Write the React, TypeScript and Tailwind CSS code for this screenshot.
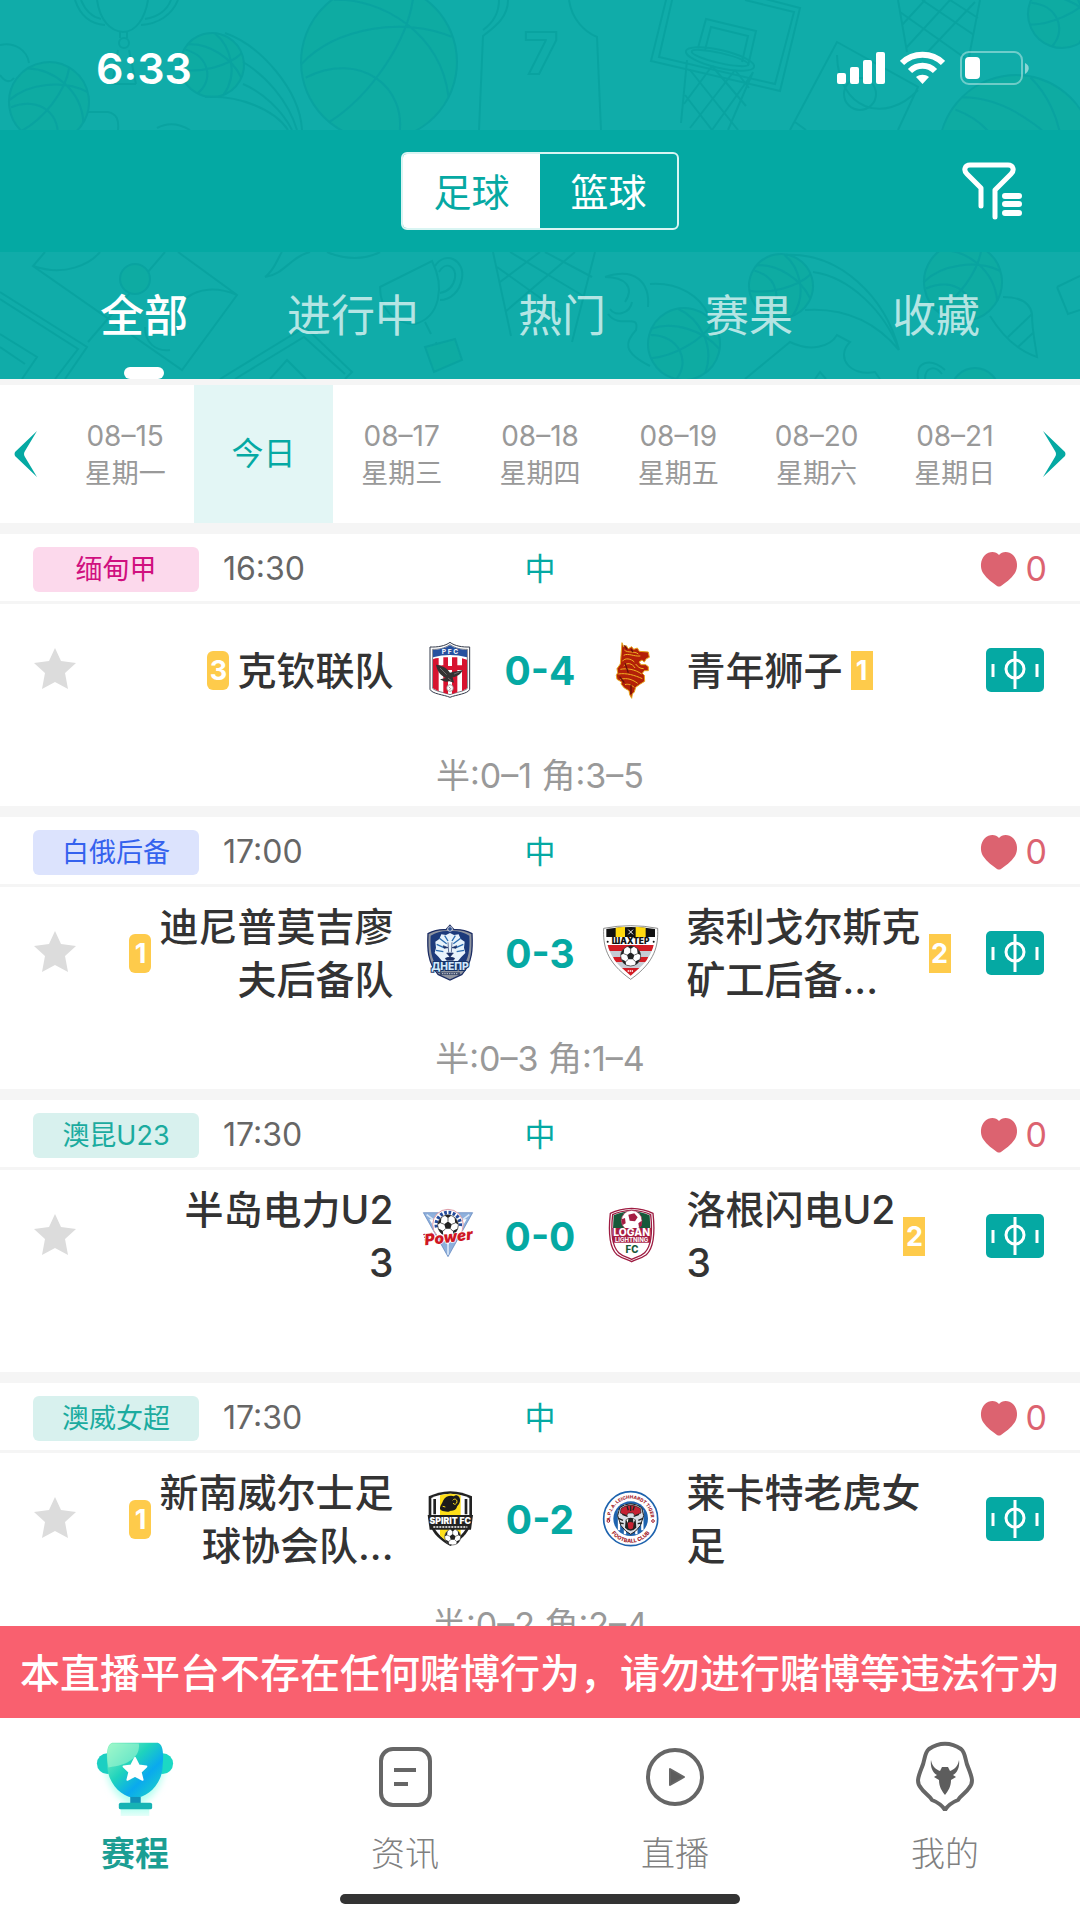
import { useState } from "react";
import type { ReactNode } from "react";

type Team = { lines: string[]; rank?: number; crest: ReactNode };
type Match = {
  league: string;
  badge: string;
  time: string;
  home: Team;
  away: Team;
  score: string;
  detail?: string;
};

/* ---------- Header doodles ---------- */

function Ball({ cx, cy, r, rot = 0 }: { cx: number; cy: number; r: number; rot?: number }) {
  return (
    <g transform={`translate(${cx} ${cy}) rotate(${rot}) scale(${r / 100})`}>
      <circle r="100" fill="#0eaba1" vectorEffect="non-scaling-stroke" />
      <path
        d="M-98 -18 C-45 -55 45 -50 98 -12 M-78 62 C-20 40 45 -20 62 -78 M-40 -90 C20 -80 85 -20 78 62 M-96 0 C-20 -20 30 40 5 99"
        fill="none"
        vectorEffect="non-scaling-stroke"
      />
    </g>
  );
}

function StatusDoodles() {
  return (
    <svg
      aria-hidden="true"
      viewBox="0 0 1080 130"
      preserveAspectRatio="xMidYMid slice"
      className="absolute inset-0 h-full w-full"
      fill="none"
      stroke="#08a19f"
      strokeWidth="2"
      opacity="0.8"
    >
      <path d="M97 0 C100 20 110 31 123 32 C136 32 145 18 148 0 M75 0 C80 15 90 24 105 25 M81 0 C85 10 92 17 101 19 M178 0 C172 15 158 24 141 25 M171 0 C167 10 158 17 145 19 M120 32 v6 M127 32 v6 M118 50 L112 84 M129 50 L136 84 M112 84 H136" />
      <circle cx="124" cy="43" r="5" />
      <path d="M0 45 C15 42 27 50 29 63 M0 75 C5 82 10 83 14 78 M88 112 H108 C117 114 119 120 118 130 M157 128 C168 122 180 124 190 130" />
      <Ball cx={49} cy={102} r={40} rot={-8} />
      <Ball cx={212} cy={65} r={32} rot={30} />
      <path d="M225 33 C260 45 300 90 302 130 M243 62 C265 75 288 100 297 130 M243 84 C262 92 282 110 292 130 M205 97 C240 95 275 110 288 130" />
      <Ball cx={379} cy={62} r={78} rot={-12} />
      <path d="M508 0 C508 20 490 30 483 36 L479 130 M569 0 C572 20 585 32 597 37 L601 130 M499 0 C499 15 490 25 483 30" />
      <text x="524" y="74" fontSize="58" fontWeight="800">7</text>
      <path d="M667 -4 L651 61 L780 91 L800 8 L750 -5 M673 -4 L659 57 L775 84 L794 12 L745 0 M698 48 L706 19 L756 31 L748 66 M705 50 L711 27 L748 36 L742 62" />
      <ellipse cx="720" cy="59" rx="35" ry="9" transform="rotate(13 720 59)" />
      <ellipse cx="720" cy="58" rx="29" ry="5" transform="rotate(13 720 58)" />
      <path d="M687 60 L681 123 M753 72 L728 130 M690 70 L738 130 M712 66 L746 106 M735 70 L749 88 M685 95 L712 130 M712 66 L684 104 M735 70 L690 128 M752 74 L712 130" />
      <path d="M898 0 L907 52 M980 0 L968 62 M900 12 L965 58 M922 0 L974 35 M950 0 L978 18 M925 0 L902 25 M950 0 L906 48 M975 2 L922 58" />
      <path d="M790 130 L837 42 L918 87 L898 130 M837 55 C838 110 885 125 918 90 M795 122 L806 130" />
      <circle cx="860" cy="94" r="16" />
      <Ball cx={1062} cy={14} r={34} rot={20} />
      <Ball cx={1016} cy={152} r={77} rot={35} />
    </svg>
  );
}

function TabDoodles() {
  return (
    <svg
      aria-hidden="true"
      viewBox="0 0 1080 127"
      preserveAspectRatio="xMidYMid slice"
      className="absolute inset-0 h-full w-full"
      fill="none"
      stroke="#08a19f"
      strokeWidth="2"
      opacity="0.8"
    >
      <path d="M45 0 L33 14 L182 118 L237 43 L178 0 M33 14 C65 25 90 12 100 0 M165 0 L88 90 M237 43 C195 25 165 55 178 82 M145 75 C145 90 155 100 170 98" />
      <path d="M0 40 L87 95 L65 127 M0 47 L78 97 L55 127 M0 82 L37 105 L22 127 M0 95 L25 112" />
      <circle cx="135" cy="27" r="15" fill="#0eaba1" />
      <path d="M265 25 C275 18 278 5 282 0 M265 25 C285 22 290 5 310 0 M327 0 C345 8 365 8 380 0" />
      <path d="M380 35 L432 9 C445 35 440 65 415 72 C395 72 380 58 380 35 Z M435 14 C445 -2 465 8 462 26 C460 40 450 48 440 48 M439 20 C446 8 457 15 455 26 C453 36 446 40 440 41 M425 70 L431 82 M436 90 L438 97" />
      <path d="M425 95 L455 87 L462 108 L434 120 Z" fill="#0eaba1" />
      <path d="M220 127 L305 75 L352 120 L345 127 M235 127 L304 85 L345 122 M270 127 L287 108 L306 127" />
      <path d="M493 0 L511 84 M595 0 L572 90 M497 15 L560 60 M510 0 L585 45 M545 0 L592 25 M540 0 L500 30 M575 0 L505 60" />
      <path d="M605 25 C635 15 650 30 648 55 M605 25 C625 25 635 35 625 50 M610 57 C615 65 630 62 632 50 M608 62 C620 78 640 60 636 78 C625 90 622 100 650 114 M650 32 C680 30 700 45 708 62" />
      <Ball cx={684} cy={92} r={36} rot={15} />
      <Ball cx={781} cy={34} r={32} rot={30} />
      <path d="M785 3 C840 0 885 45 899 98 M813 20 C850 25 885 60 899 98 M805 58 C850 55 880 75 899 98" />
      <path d="M745 127 L790 90 C810 100 830 95 837 83 L850 90 C835 105 850 125 875 120 L880 127 M815 127 L820 120 L826 127 M918 127 C915 110 930 105 945 118 M925 127 C925 115 935 113 942 122" />
      <Ball cx={963} cy={30} r={39} rot={-10} />
      <path d="M1003 45 C1020 45 1030 50 1032 62 C1032 80 1036 95 1037 105 C1015 98 1000 80 990 64 M1032 62 L1008 85 M1034 80 L1018 95 M1057 35 L1080 24 M1057 35 L1068 62 L1080 58" />
      <circle cx="975" cy="140" r="24" fill="#0eaba1" />
    </svg>
  );
}

/* ---------- Icons ---------- */

function SignalIcon() {
  return (
    <svg viewBox="0 0 48 34" className="h-[34px] w-12" fill="#fff" aria-label="信号">
      <rect x="0" y="22" width="9" height="11" rx="2" />
      <rect x="13" y="16" width="9" height="17" rx="2" />
      <rect x="26" y="9" width="9" height="24" rx="2" />
      <rect x="39" y="1" width="9" height="32" rx="2" />
    </svg>
  );
}

function WifiIcon() {
  return (
    <svg viewBox="0 0 45 34" className="h-[34px] w-[45px]" fill="none" stroke="#fff" strokeWidth="6" aria-label="无线网络">
      <path d="M2 12 C13 1 32 1 43 12" />
      <path d="M10 20 C17 13 28 13 35 20" />
      <path d="M16 26 C20 23 25 23 29 26 L22.500 33 Z" fill="#fff" stroke="none" />
    </svg>
  );
}

function BatteryIcon() {
  return (
    <svg viewBox="0 0 70 34" className="h-[34px] w-[70px]" aria-label="电量">
      <rect x="1" y="1" width="61" height="32" rx="8" fill="none" stroke="#fff" strokeOpacity="0.4" strokeWidth="2" />
      <rect x="5" y="6" width="15" height="22" rx="4" fill="#fff" />
      <path d="M65 12 C70 14 70 20 65 23 Z" fill="#fff" fillOpacity="0.5" />
    </svg>
  );
}

function FilterIcon() {
  return (
    <svg viewBox="0 0 60 58" className="h-[58px] w-[60px]" fill="none" stroke="#fff" strokeWidth="5" strokeLinecap="round" strokeLinejoin="round">
      <path d="M19 44 V26 L5 12 C1 8 3 3 8 3 H46 C51 3 53 8 49 12 L33 28 V55" />
      <path d="M43 34 H57 M43 42 H57 M43 51 H57" strokeWidth="6" />
    </svg>
  );
}

function ArrowIcon({ flip = false }: { flip?: boolean }) {
  return (
    <svg viewBox="0 0 24 46" className={flip ? "h-[46px] w-6 rotate-180" : "h-[46px] w-6"} fill="#05a9a3">
      <path d="M23 0 L1 21 Q0 23 1 25 L23 46 L11 26 Q9 23 11 20 Z" />
    </svg>
  );
}

function HeartIcon() {
  return (
    <svg viewBox="0 0 38 36" className="h-9 w-[38px]" fill="#dc6370">
      <path d="M19 4 C22 0 29 0 33 4 C38 9 38 17 35 22 C31 28 25 32 21 35 Q19 36 17 35 C13 32 7 28 3 22 C0 17 0 9 5 4 C9 0 16 0 19 4 Z" />
    </svg>
  );
}

function StarIcon() {
  return (
    <svg viewBox="0 2 42 41" className="h-[41px] w-[42px] overflow-visible" fill="#dcdcdc">
      <path d="M21 0 L27 13 L42 15 L31 25 L34 41 L21 34 L8 41 L11 25 L0 15 L15 13 Z" />
    </svg>
  );
}

function PitchIcon() {
  return (
    <svg viewBox="0 0 58 44" className="h-11 w-[58px]" fill="none" stroke="#fff">
      <rect width="58" height="44" rx="5" fill="#05a9a3" stroke="none" />
      <path d="M29 3 V41" strokeWidth="3" />
      <circle cx="29" cy="21" r="9" strokeWidth="3" />
      <path d="M7 16 V29 M51 16 V29" strokeWidth="3" />
    </svg>
  );
}

function TrophyIcon() {
  return (
    <svg viewBox="0 -5 84 84" className="h-20 w-20">
      <defs>
        <linearGradient id="cup" x1="0" y1="0" x2="1" y2="1">
          <stop offset="0" stopColor="#8df5bf" />
          <stop offset="0.4" stopColor="#1fd3bd" />
          <stop offset="0.65" stopColor="#0aa9ee" />
          <stop offset="1" stopColor="#1fdcc0" />
        </linearGradient>
        <linearGradient id="glow" x1="0" y1="0" x2="0" y2="1">
          <stop offset="0" stopColor="#b8fff0" />
          <stop offset="1" stopColor="#b8fff0" stopOpacity="0" />
        </linearGradient>
        <filter id="soft" x="-20%" y="-20%" width="140%" height="140%">
          <feGaussianBlur stdDeviation="4" />
        </filter>
      </defs>
      <path d="M10 20 H74 C72 48 60 60 46 68 H38 C24 60 12 48 10 20 Z" fill="#b4fff0" filter="url(#soft)" />
      <rect x="27" y="70" width="30" height="14" fill="url(#glow)" />
      <circle cx="13" cy="24" r="11" fill="#1ccfc2" />
      <circle cx="71" cy="24" r="11" fill="#1cd8c4" />
      <path d="M18 2 H66 C72 4 72 14 71 26 C71 46 54 60 42 60 C30 60 13 46 13 26 C12 14 12 4 18 2 Z" fill="url(#cup)" />
      <path d="M18 3 H46 C48 16 36 26 14 28 C12 16 12 5 18 3 Z" fill="#b6fbd3" fillOpacity="0.5" />
      <path d="M37 59 H48 V66 H37 Z" fill="#1090b8" />
      <rect x="25" y="65" width="35" height="7" rx="2" fill="#17b3b4" />
      <path d="M42 18 L46 26 L54 27 L48 33 L50 41 L42 37 L34 41 L36 33 L30 27 L38 26 Z" fill="#fff" stroke="#fff" strokeWidth="2" strokeLinejoin="round" />
    </svg>
  );
}

function NewsIcon() {
  return (
    <svg viewBox="0 0 60 64" className="h-16 w-[60px]" fill="none" stroke="#666" strokeWidth="4">
      <rect x="6" y="5" width="49" height="56" rx="12" />
      <path d="M19 26 H41 M19 40 H33" />
    </svg>
  );
}

function LiveIcon() {
  return (
    <svg viewBox="0 0 60 64" className="h-16 w-[60px]" fill="none" stroke="#666" strokeWidth="4">
      <circle cx="30" cy="33" r="27" />
      <path d="M25 25 V41 L39 33 Z" fill="#5d5d5d" strokeWidth="2" strokeLinejoin="round" />
    </svg>
  );
}

function MineIcon() {
  return (
    <svg viewBox="0 0 60 70" className="h-[70px] w-[60px]" fill="none" stroke="#666" strokeWidth="4" strokeLinejoin="round">
      <path d="M14 8 C24 1 36 1 46 8 C51 12 50 20 53 26 C57 36 59 42 54 47 C51 52 46 54 43 59 C38 61 33 64 30 69 C27 64 22 61 17 59 C14 54 9 52 6 47 C1 42 3 36 7 26 C10 20 9 12 14 8 Z" />
      <path
        d="M16 19 C17 25 20 28 25 30 L27 26 H33 L35 30 C40 28 43 25 44 19 C45 26 42 32 38 34 L41 36 L36 39 C36 46 33 50 30 54 C27 50 24 46 24 39 L19 36 L22 34 C18 32 15 26 16 19 Z"
        fill="#5d5d5d"
        stroke="none"
      />
    </svg>
  );
}

/* ---------- Club crests ---------- */

function Crest({ children }: { children: ReactNode }) {
  return (
    <svg viewBox="0 0 168 168" className="h-14 w-14 shrink-0 overflow-visible" aria-hidden="true">
      {children}
    </svg>
  );
}

function Football({ cx, cy, r }: { cx: number; cy: number; r: number }) {
  return (
    <g transform={`translate(${cx} ${cy}) scale(${r / 30})`}>
      <circle r="30" fill="#fff" stroke="#222" strokeWidth="2" />
      <path
        d="M0 -11 L11 -3 L7 10 H-7 L-11 -3 Z M-9 -28 Q0 -33 9 -28 L0 -21 Z M19 -23 Q29 -13 30 -3 L21 -7 Z M28 9 Q24 22 14 27 L15 16 Z M-19 -23 Q-29 -13 -30 -3 L-21 -7 Z M-28 9 Q-24 22 -14 27 L-15 16 Z"
        fill="#222"
      />
      <path d="M0 -11 V-22 M11 -3 L21 -7 M7 10 L15 17 M-7 10 L-15 17 M-11 -3 L-21 -7" stroke="#222" strokeWidth="2" />
    </g>
  );
}

const pfc = (
  <Crest>
    <path d="M84 1 C98 12 122 16 143 15 V142 C138 156 102 158 84 166 C66 158 30 156 24 142 V15 C46 16 70 12 84 1 Z" fill="#fff" stroke="#333a4a" strokeWidth="3" />
    <path d="M84 8 C99 19 120 23 136 22 V139 C128 148 102 151 84 158 C66 151 40 148 32 139 V22 C48 23 69 19 84 8 Z" fill="#fff" stroke="#333a4a" strokeWidth="2" />
    <path d="M84 10 C99 20 120 24 135 24 V46 Q84 32 33 46 V24 C48 24 69 20 84 10 Z" fill="#26519f" />
    <text x="84" y="37" textAnchor="middle" fontSize="20" fontWeight="700" fill="#fff">P F C</text>
    <path d="M33 52 Q40 48 50 48 V148 L33 139 Z M64 46 H78 V156 L64 152 Z M90 46 H106 V151 L90 156 Z M120 49 L135 53 V139 L120 147 Z" fill="#d7132f" />
    <path d="M33 70 H135 V84 H33 Z" fill="#d7132f" />
    <path d="M78 44 H90 V72 H78 Z M54 55 H60 V70 H54 Z" fill="#fff" />
    <path d="M42 68 C58 70 74 76 84 92 C98 88 112 88 122 84 C118 96 104 104 92 106 L96 122 L82 118 C70 122 60 116 54 112 L72 108 C56 100 46 88 42 68 Z" fill="#333" />
    <path d="M54 78 L74 98 M96 96 L112 90 M78 108 L88 116" stroke="#8c8c8c" strokeWidth="2" />
    <circle cx="84" cy="138" r="10" fill="#fff" stroke="#777" strokeWidth="2" />
    <path d="M80 134 L86 140 L82 144" stroke="#777" strokeWidth="2" fill="none" />
  </Crest>
);

const lions = (
  <Crest>
    <path
      d="M57 2 L62 14 L70 11 L76 20 L86 14 L92 22 L103 18 L109 28 L136 30 L139 46 L130 50 L124 60 L117 54 L108 60 L114 68 L128 68 L136 74 L136 86 L124 86 L118 94 L124 100 L125 118 L112 126 L98 136 L94 150 L88 156 L86 169 L80 158 L78 146 L64 138 L54 126 L56 120 L42 112 L40 100 L44 92 L42 80 L52 66 L54 40 Z"
      fill="#b32008"
      stroke="#e7a51c"
      strokeWidth="3"
    />
    <path
      d="M64 24 C74 34 94 26 106 36 M62 40 C76 32 92 44 112 42 M58 58 C66 46 84 50 94 60 M62 72 C72 60 88 64 96 78 M52 82 C72 78 96 82 116 96 M46 96 C70 92 96 100 118 110 M52 112 C74 106 90 114 104 124 M66 128 C76 124 86 130 94 136 M98 66 C104 74 110 80 122 80"
      fill="none"
      stroke="#f0b222"
      strokeWidth="3"
    />
    <path d="M64 10 L72 22 M84 22 L90 30 M66 64 L76 92 M50 104 L64 122 M84 128 V156" stroke="#68100a" strokeWidth="4" />
  </Crest>
);

const dnepr = (
  <Crest>
    <path d="M84 1 L96 14 Q124 12 150 26 C152 70 152 112 120 148 L84 165 L48 148 C16 112 16 70 18 26 Q44 12 72 14 Z" fill="#8f949f" stroke="#1b2c63" strokeWidth="4" />
    <path d="M84 18 Q118 16 142 32 C144 70 142 102 118 132 H50 C26 102 24 70 26 32 Q50 16 84 18 Z" fill="#1d3b7b" />
    <path d="M84 24 L96 30 L110 28 L116 42 L128 50 L126 68 L130 84 L118 96 L108 108 H60 L50 96 L38 84 L42 68 L40 50 L52 42 L58 28 L72 30 Z" fill="#e8f3fb" />
    <path d="M52 40 L74 56 M44 58 L66 68 M42 76 L64 80 M116 40 L94 56 M124 58 L102 68 M126 76 L104 80 M68 32 L78 48 M100 32 L90 48" stroke="#2b6cb0" strokeWidth="4" />
    <path d="M64 62 L78 68 L66 70 Z M104 62 L90 68 L102 70 Z M74 84 H94 L84 96 Z M70 100 Q84 92 98 100 L94 106 H74 Z M78 52 L80 82 M90 52 L88 82" fill="#1a2f66" stroke="#1a2f66" strokeWidth="2" />
    <circle cx="84" cy="12" r="7" fill="#2f4f8c" stroke="#fff" strokeWidth="2" />
    <text x="84" y="136" textAnchor="middle" fontSize="31" fontWeight="800" fill="#cfe8fb" stroke="#173468" strokeWidth="6" paintOrder="stroke">ДНЕПР</text>
    <path d="M54 142 H114 V150 H54 Z" fill="#3e4b6b" />
    <path d="M60 146 H108" stroke="#c7cbd6" strokeWidth="3" strokeDasharray="4 3" />
  </Crest>
);

const shakhter = (
  <Crest>
    <path d="M2 10 Q83 -6 164 10 C166 60 158 110 83 163 C8 110 0 60 2 10 Z" fill="#fff" stroke="#555" strokeWidth="2" />
    <path d="M10 12 Q83 0 156 12 V36 H10 Z" fill="#111" />
    <path d="M38 8 L66 5 V36 H38 Z M98 5 L128 8 V36 H98 Z" fill="#ffd90f" />
    <path d="M76 14 L90 28 M90 14 L76 28" stroke="#fff" strokeWidth="3" />
    <path d="M14 60 H152 Q150 70 146 78 H20 Q16 70 14 60 Z M30 96 H136 Q132 106 126 112 H40 Q34 106 30 96 Z M56 128 H110 L83 152 Z" fill="#d21c24" />
    <path d="M20 78 H146 Q142 88 137 96 H29 Q24 88 20 78 Z M40 112 H126 Q118 122 110 128 H56 Q48 122 40 112 Z" fill="#c5ccd4" />
    <text x="83" y="56" textAnchor="middle" fontSize="25" fontWeight="900" fill="#111">ШАХТЕР</text>
    <circle cx="14" cy="50" r="3" fill="#111" />
    <circle cx="152" cy="50" r="3" fill="#111" />
    <Football cx={83} cy={93} r={30} />
    <path d="M74 138 H92" stroke="#fff" strokeWidth="4" strokeDasharray="4 2" />
  </Crest>
);

const power = (
  <Crest>
    <path d="M4 14 L152 14 L78 146 Z" fill="#8eb0dc" stroke="#5b80bb" strokeWidth="2" />
    <path d="M22 34 L134 34 L100 92 L82 104 L78 112 L74 104 L56 92 Z" fill="#fff" />
    <path d="M14 20 L46 44 M142 20 L110 44 M78 140 V108" stroke="#dbe9f8" strokeWidth="5" />
    <circle cx="78" cy="50" r="46" fill="#fff" stroke="#dc9aa5" strokeWidth="3" />
    <path d="M44 58 A36 36 0 1 1 114 58" fill="none" stroke="#244a9a" strokeWidth="11" strokeDasharray="8 5" />
    <Football cx={78} cy={52} r={31} />
    <path d="M4 80 L30 76 M6 88 L24 85 M8 96 L20 94" stroke="#b7131f" strokeWidth="4" />
    <text x="80" y="103" textAnchor="middle" fontSize="46" fontWeight="900" fontStyle="italic" fill="#cf1724" stroke="#fff" strokeWidth="4" paintOrder="stroke" transform="rotate(-7 82 90)">Power</text>
  </Crest>
);

const logan = (
  <Crest>
    <path d="M86 1 C110 2 134 8 150 16 C156 70 152 120 130 140 C114 152 98 154 86 161 C74 154 58 152 42 140 C20 120 16 70 22 16 C38 8 62 2 86 1 Z" fill="#fff" stroke="#9e1c42" strokeWidth="4" />
    <path d="M86 7 C108 8 128 12 143 20 C148 66 146 114 125 134 C112 146 98 148 86 154 C74 148 60 146 47 134 C26 114 24 66 29 20 C44 12 64 8 86 7 Z" fill="none" stroke="#9e1c42" strokeWidth="4" />
    <path d="M32 22 C50 14 70 10 86 10 C102 10 122 14 140 22 L142 62 H30 Z" fill="#17593a" />
    <circle cx="86" cy="38" r="31" fill="#fff" stroke="#9e1c42" strokeWidth="2" />
    <path d="M76 20 L94 16 L104 28 L96 40 L80 38 Z M56 34 L66 30 L68 46 L58 52 Z M106 46 L116 38 L116 54 L108 58 Z" fill="#a51d43" />
    <path d="M28 60 H144 L142 104 H30 Z" fill="#a51d43" />
    <text x="86" y="84" textAnchor="middle" fontSize="31" fontWeight="800" fill="#fff">LOGAN</text>
    <text x="86" y="101" textAnchor="middle" fontSize="18" fontWeight="700" fill="#fff">LIGHTNING</text>
    <text x="87" y="134" textAnchor="middle" fontSize="29" fontWeight="800" fill="#17593a">FC</text>
  </Crest>
);

const spirit = (
  <Crest>
    <path d="M85 1 C110 2 132 8 150 16 V80 C148 120 120 146 85 165 C50 146 22 120 20 80 V16 C38 8 60 2 85 1 Z" fill="#222" />
    <path d="M85 8 C108 9 126 13 142 21 V80 C140 114 116 138 85 156 C54 138 30 114 28 80 V21 C44 13 62 9 85 8 Z" fill="#fff" />
    <path d="M54 13 Q85 4 116 13 V134 Q102 148 85 156 Q68 148 54 134 Z" fill="#ffdf19" />
    <path d="M34 24 H42 V70 H34 Z M128 24 H136 V70 H128 Z" fill="#222" />
    <path d="M64 28 C70 14 88 12 96 16 C102 8 116 16 114 30 C112 42 106 42 104 50 C98 62 88 56 80 62 C70 62 52 60 54 50 C56 42 60 38 64 28 Z" fill="#1b1b1b" />
    <path d="M92 28 C98 20 108 26 104 36 C100 42 94 40 94 36 M62 46 L70 48" stroke="#ffdf19" strokeWidth="3" fill="none" />
    <path d="M17 72 L153 72 L147 116 H23 Z" fill="#222" />
    <text x="85" y="99" textAnchor="middle" fontSize="26" fontWeight="900" fill="#fff">SPIRIT FC</text>
    <path d="M34 108 H136" stroke="#fff" strokeWidth="4" strokeDasharray="6 3" />
    <Football cx={92} cy={138} r={24} />
  </Crest>
);

const tigers = (
  <Crest>
    <defs>
      <path id="tiger-top" d="M22 84 A61 61 0 0 1 144 84" />
      <path id="tiger-bottom" d="M12 84 A71 71 0 0 0 154 84" />
    </defs>
    <circle cx="83" cy="83" r="81" fill="#fff" stroke="#1e63ae" strokeWidth="5" />
    <circle cx="83" cy="83" r="52" fill="#1e63ae" />
    <path d="M48 58 V118 M66 40 V130 M100 40 V130 M118 58 V118" stroke="#fff" strokeWidth="7" />
    <text fontSize="14" fontWeight="800" fill="#a31d2c">
      <textPath href="#tiger-top" startOffset="50%" textAnchor="middle">A.P.I.A. LEICHHARDT TIGERS</textPath>
    </text>
    <text fontSize="16" fontWeight="800" fill="#a31d2c">
      <textPath href="#tiger-bottom" startOffset="50%" textAnchor="middle">FOOTBALL CLUB</textPath>
    </text>
    <path d="M50 50 L64 42 Q83 34 102 42 L116 50 L122 74 L112 104 L98 120 L83 130 L68 120 L54 104 L44 74 Z" fill="#d9dfe6" stroke="#222" strokeWidth="3" />
    <path d="M54 52 L66 46 Q83 38 100 46 L112 52 L114 66 L96 74 L90 66 H76 L70 74 L52 66 Z" fill="#c62232" stroke="#222" strokeWidth="2" />
    <path d="M58 70 L74 76 M108 70 L92 76 M46 82 L60 88 M120 82 L106 88 M50 96 L62 98 M116 96 L104 98 M83 44 V60 M72 46 L76 58 M94 46 L90 58" stroke="#222" strokeWidth="4" />
    <path d="M68 86 Q83 74 98 86 L100 110 Q83 128 66 110 Z" fill="#222" />
    <path d="M74 96 Q83 90 92 96 L90 112 Q83 118 76 112 Z" fill="#c62232" />
    <path d="M70 86 L76 84 L74 96 Z M96 86 L90 84 L92 96 Z" fill="#fff" />
    <circle cx="16" cy="90" r="4" fill="none" stroke="#a31d2c" strokeWidth="3" />
    <circle cx="150" cy="90" r="4" fill="none" stroke="#a31d2c" strokeWidth="3" />
  </Crest>
);

/* ---------- Data ---------- */

const filters = ["全部", "进行中", "热门", "赛果", "收藏"];

const days = [
  { date: "08–15", week: "星期一" },
  { date: "今日" },
  { date: "08–17", week: "星期三" },
  { date: "08–18", week: "星期四" },
  { date: "08–19", week: "星期五" },
  { date: "08–20", week: "星期六" },
  { date: "08–21", week: "星期日" },
];

const matches: Match[] = [
  {
    league: "缅甸甲",
    badge: "bg-[#fcd9ec] text-[#d0107f]",
    time: "16:30",
    home: { lines: ["克钦联队"], rank: 3, crest: pfc },
    away: { lines: ["青年狮子"], rank: 1, crest: lions },
    score: "0-4",
    detail: "半:0–1 角:3–5",
  },
  {
    league: "白俄后备",
    badge: "bg-[#dce3fd] text-[#3562ee]",
    time: "17:00",
    home: { lines: ["迪尼普莫吉廖", "夫后备队"], rank: 1, crest: dnepr },
    away: { lines: ["索利戈尔斯克", "矿工后备..."], rank: 2, crest: shakhter },
    score: "0-3",
    detail: "半:0–3 角:1–4",
  },
  {
    league: "澳昆U23",
    badge: "bg-[#d8f1ee] text-[#1bab9f]",
    time: "17:30",
    home: { lines: ["半岛电力U2", "3"], crest: power },
    away: { lines: ["洛根闪电U2", "3"], rank: 2, crest: logan },
    score: "0-0",
  },
  {
    league: "澳威女超",
    badge: "bg-[#d8f1ee] text-[#1bab9f]",
    time: "17:30",
    home: { lines: ["新南威尔士足", "球协会队..."], rank: 1, crest: spirit },
    away: { lines: ["莱卡特老虎女", "足"], crest: tigers },
    score: "0-2",
    detail: "半:0–2 角:2–4",
  },
];

const navItems = [
  { label: "赛程", icon: <TrophyIcon /> },
  { label: "资讯", icon: <NewsIcon /> },
  { label: "直播", icon: <LiveIcon /> },
  { label: "我的", icon: <MineIcon /> },
];

/* ---------- Sections ---------- */

function TeamName({ lines }: { lines: string[] }) {
  return (
    <span className="text-[39px] leading-[53px] font-medium text-[#333] whitespace-nowrap">
      {lines.map((line) => (
        <span key={line} className="block">
          {line}
        </span>
      ))}
    </span>
  );
}

function MatchCard({ match }: { match: Match }) {
  const { home, away } = match;

  return (
    <article className="bg-white">
      <div className="grid h-[70px] grid-cols-[1fr_auto_1fr] items-center border-b-[3px] border-[#f5f5f5] px-[33px] pt-[3px]">
        <div className="flex items-center gap-6">
          <span className={`w-[166px] rounded-md text-center text-[27px] leading-[45px] ${match.badge}`}>{match.league}</span>
          <time className="text-[32px] leading-10 text-[#666]">{match.time}</time>
        </div>
        <span className="text-[31px] leading-10 text-[#05a9a3]">中</span>
        <button type="button" aria-label="点赞" className="flex items-center gap-2 justify-self-end text-[34px] leading-10 text-[#dc6370]">
          <HeartIcon />0
        </button>
      </div>

      <div className="grid h-[132px] grid-cols-[1fr_auto_1fr] items-center">
        <div className="flex items-center justify-between pl-[34px]">
          <button type="button" aria-label="收藏比赛">
            <StarIcon />
          </button>
          <div className="flex items-center gap-2 text-right">
            {home.rank && (
              <span className="w-[22px] rounded-md bg-[#fecb4b] text-center text-[27px] leading-[39px] font-bold text-white">{home.rank}</span>
            )}
            <TeamName lines={home.lines} />
          </div>
        </div>
        <div className="flex items-center px-7">
          {home.crest}
          <strong className="w-[125px] text-center text-[39px] leading-[53px] font-bold text-[#05a9a3]">{match.score}</strong>
          {away.crest}
        </div>
        <div className="flex items-center justify-between pr-9">
          <div className="flex items-center gap-2">
            <TeamName lines={away.lines} />
            {away.rank && (
              <span className="w-[22px] bg-[#fecb4b] text-center text-[27px] leading-[39px] font-bold text-white">{away.rank}</span>
            )}
          </div>
          <button type="button" aria-label="比赛详情">
            <PitchIcon />
          </button>
        </div>
      </div>

      <p className="h-[70px] pt-5 text-center text-[34px] leading-10 text-[#999]">{match.detail}</p>
    </article>
  );
}

function App() {
  const [sport, setSport] = useState("足球");
  const [filter, setFilter] = useState("全部");
  const [day, setDay] = useState("今日");

  return (
    <div className="flex h-screen flex-col overflow-hidden bg-[#f5f5f5] font-['Inter','Noto_Sans_CJK_SC',sans-serif]" lang="zh-CN">
      {/* Header */}
      <header className="shrink-0 bg-[#10aca9]">
        <div className="relative h-[130px] overflow-hidden">
          <StatusDoodles />
          <div className="relative flex h-full items-center justify-between pt-[6px] pr-[50px] pl-24 text-white">
            <span className="text-[43px] leading-[50px] font-semibold">6:33</span>
            <div className="flex items-center gap-[15px]">
              <SignalIcon />
              <WifiIcon />
              <BatteryIcon />
            </div>
          </div>
        </div>

        <div className="grid h-[122px] grid-cols-[1fr_auto_1fr] items-center bg-[#04a9a3] px-[58px]">
          <div className="col-start-2 flex overflow-hidden rounded-md border-2 border-[#d9f5f3]">
            {["足球", "篮球"].map((name) => (
              <button
                key={name}
                type="button"
                onClick={() => setSport(name)}
                className={
                  sport === name
                    ? "w-[137px] bg-white pt-[2px] text-[38px] leading-[72px] text-[#05a9a3]"
                    : "w-[137px] pt-[2px] text-[38px] leading-[72px] text-white"
                }
              >
                {name}
              </button>
            ))}
          </div>
          <button type="button" aria-label="筛选" className="justify-self-end">
            <FilterIcon />
          </button>
        </div>

        <div className="relative h-[127px] overflow-hidden">
          <TabDoodles />
          <div className="relative flex h-full justify-center gap-[99px]">
            {filters.map((name) => (
              <button key={name} type="button" onClick={() => setFilter(name)} className="flex flex-col items-center justify-between">
                <span
                  className={
                    filter === name
                      ? "pt-[34px] text-[44px] leading-[60px] font-medium text-white"
                      : "pt-[34px] text-[44px] leading-[60px] text-white/70"
                  }
                >
                  {name}
                </span>
                {filter === name && <span className="h-3 w-10 rounded-full bg-white" />}
              </button>
            ))}
          </div>
        </div>
      </header>

      {/* Date strip */}
      <div className="mt-[6px] flex h-[138px] shrink-0 bg-white">
        <button type="button" aria-label="前一周" className="flex w-14 items-center justify-center pr-1">
          <ArrowIcon />
        </button>
        <div className="grid flex-1 grid-cols-7">
          {days.map((d) => (
            <button
              key={d.date}
              type="button"
              onClick={() => setDay(d.date)}
              className={
                day === d.date
                  ? "flex flex-col items-center justify-center bg-[#e3f6f5] text-[#05a9a3]"
                  : "flex flex-col items-center justify-center pt-[2px] text-[#999]"
              }
            >
              {d.week ? (
                <>
                  <span className="text-[28px] leading-[38px]">{d.date}</span>
                  <span className="text-[27px] leading-[38px]">{d.week}</span>
                </>
              ) : (
                <span className="text-[32px] leading-10">{d.date}</span>
              )}
            </button>
          ))}
        </div>
        <button type="button" aria-label="后一周" className="flex w-14 items-center justify-center pl-1">
          <ArrowIcon flip />
        </button>
      </div>

      {/* Matches */}
      <main className="mt-[11px] flex min-h-0 flex-1 flex-col gap-[11px] overflow-hidden">
        {matches.map((m) => (
          <MatchCard key={m.league} match={m} />
        ))}
      </main>

      <p className="shrink-0 bg-[#f9606f] pt-1 text-center text-[40px] leading-[88px] font-medium whitespace-nowrap text-white">
        本直播平台不存在任何赌博行为，请勿进行赌博等违法行为
      </p>

      {/* Bottom nav */}
      <footer className="shrink-0 bg-white pt-[26px] pb-4">
        <nav className="grid grid-cols-4">
          {navItems.map((item, i) => (
            <a key={item.label} href="#" className="flex flex-col items-center gap-[26px]">
              <span className="flex h-16 items-center justify-center">{item.icon}</span>
              <span className={i === 0 ? "text-[34px] leading-10 font-bold text-[#1b9e93]" : "text-[34px] leading-10 font-light text-[#808080]"}>
                {item.label}
              </span>
            </a>
          ))}
        </nav>
        <div className="mx-auto mt-5 h-[10px] w-[400px] rounded-full bg-[#333]" />
      </footer>
    </div>
  );
}

export default App;
